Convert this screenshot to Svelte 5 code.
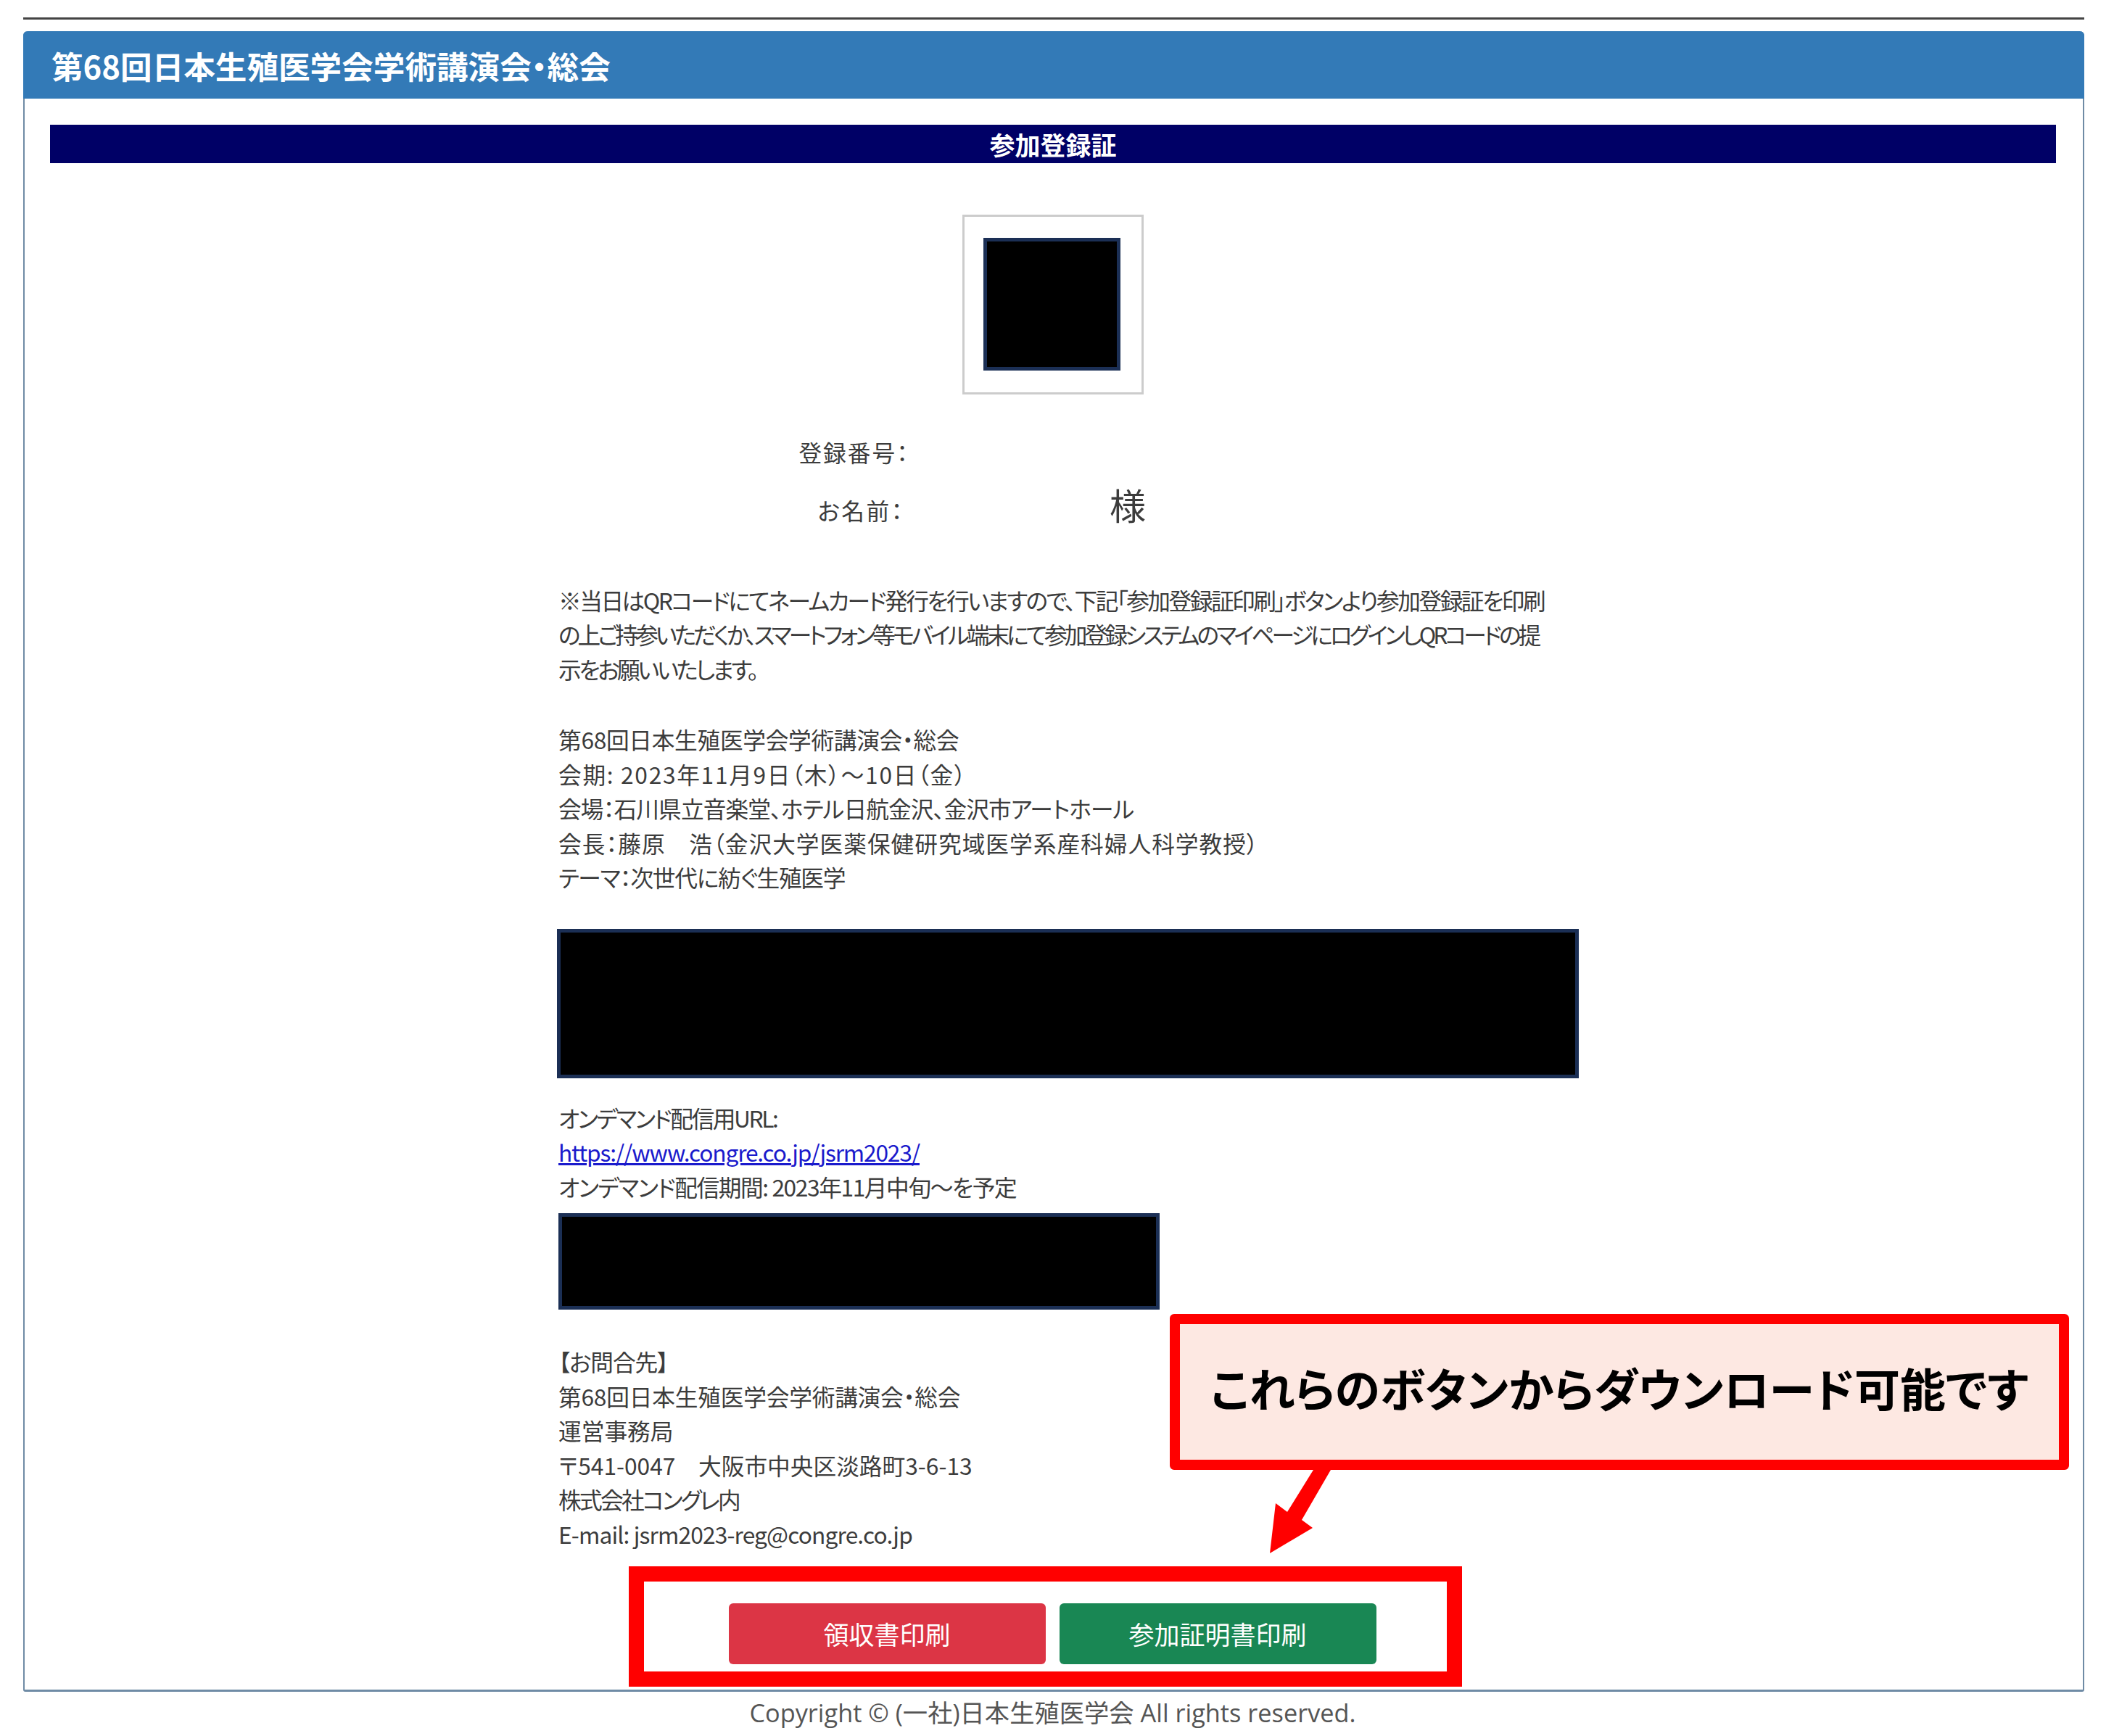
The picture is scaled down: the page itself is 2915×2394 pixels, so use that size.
<script>
  const notice = [
    { t: "※当日はQRコードにてネームカード発行を行いますので、下記「参加登録証印刷」ボタンより参加登録証を印刷", ls: -2.5 },
    { t: "の上ご持参いただくか、スマートフォン等モバイル端末にて参加登録システムのマイページにログインしQRコードの提", ls: -3.95 },
    { t: "示をお願いいたします。", ls: -3.4 },
  ];
  const meeting = [
    { t: "第68回日本生殖医学会学術講演会・総会", ls: -0.3 },
    { t: "会期: 2023年11月9日（木）～10日（金）", ls: 1.7 },
    { t: "会場：石川県立音楽堂、ホテル日航金沢、金沢市アートホール", ls: -0.9 },
    { t: "会長：藤原　浩（金沢大学医薬保健研究域医学系産科婦人科学教授）", ls: 1 },
    { t: "テーマ：次世代に紡ぐ生殖医学", ls: -1.2 },
  ];
  const contact = [
    { t: "【お問合先】", ls: -1 },
    { t: "第68回日本生殖医学会学術講演会・総会", ls: -0.2 },
    { t: "運営事務局", ls: 0 },
    { t: "〒541-0047　大阪市中央区淡路町3-6-13", ls: 0 },
    { t: "株式会社コングレ内", ls: -2.7 },
    { t: "E-mail: jsrm2023-reg@congre.co.jp", ls: -0.85 },
  ];
</script>

<div class="page">
  <div class="rule"></div>

  <section class="card">
    <header class="card-head">第68回日本生殖医学会学術講演会・総会</header>
    <div class="card-body">
      <h2 class="banner">参加登録証</h2>

      <div class="thumb"><div class="redact qr"></div></div>

      <dl class="who">
        <dt>登録番号：</dt>
        <dd></dd>
        <dt class="short">お名前：</dt>
        <dd class="name">様</dd>
      </dl>

      <div class="info">
        <p>{#each notice as line}<span style:letter-spacing="{line.ls}px">{line.t}</span>{/each}</p>
        <p class="gap">{#each meeting as line}<span style:letter-spacing="{line.ls}px">{line.t}</span>{/each}</p>

        <div class="redact wide"></div>

        <p class="ondemand">
          <span style:letter-spacing="-2.4px">オンデマンド配信用URL:</span>
          <span style:letter-spacing="-1.15px"><a href="https://www.congre.co.jp/jsrm2023/">https://www.congre.co.jp/jsrm2023/</a></span>
          <span style:letter-spacing="-1.4px">オンデマンド配信期間: 2023年11月中旬～を予定</span>
        </p>

        <div class="redact narrow"></div>

        <p class="contact">{#each contact as line}<span style:letter-spacing="{line.ls}px">{line.t}</span>{/each}</p>
      </div>

      <div class="actions">
        <button class="btn red">領収書印刷</button>
        <button class="btn green">参加証明書印刷</button>
      </div>
    </div>
  </section>

  <footer class="copy">Copyright © (一社)日本生殖医学会 All rights reserved.</footer>

  <!-- annotation layer -->
  <div class="callout">これらのボタンからダウンロード可能です</div>
  <svg class="arrow" width="120" height="130" viewBox="0 0 120 130">
    <polygon points="61,0 85,0 45,69 60,80 1,115 9,46 25,58" fill="#ff0000" />
  </svg>
  <div class="frame"></div>
</div>

<style>
  :global(body) {
    margin: 0;
    background: #fff;
  }

  .page {
    position: relative;
    width: 2915px;
    height: 2394px;
    padding-top: 24px;
    box-sizing: border-box;
    overflow: hidden;
    font-family: "Noto Sans CJK JP", sans-serif;
    font-feature-settings: "palt";
    font-size: 31.7px;
    line-height: 47.5px;
    color: #3c3c3c;
  }

  .rule {
    height: 3px;
    margin: 0 41px 0 32px;
    background: #444;
  }

  .card {
    margin: 16px 41px 0 32px;
    height: 2290px;
    box-sizing: border-box;
    border: solid #6f8ba5;
    border-width: 0 2px 3px 2px;
    border-radius: 6px 6px 3px 3px;
  }

  .card-head {
    height: 93px;
    margin: 0 -2px;
    padding-left: 39px;
    border-radius: 6px 6px 0 0;
    background: #337ab7;
    color: #fff;
    font-size: 43.6px;
    font-weight: 700;
    line-height: 95px;
  }

  .card-body {
    padding: 36px 37px 0 35px;
  }

  .banner {
    margin: 0;
    height: 53px;
    background: #000066;
    color: #fff;
    font-size: 35px;
    font-weight: 700;
    line-height: 53px;
    text-align: center;
  }

  .thumb {
    width: 250px;
    height: 248px;
    margin: 71px auto 0;
    padding: 29px 0 0 26px;
    box-sizing: border-box;
    border: 3px solid #ccc;
  }

  .redact {
    box-sizing: border-box;
    border: 5px solid #1b2f55;
    background: #000;
  }

  .qr {
    width: 189px;
    height: 183px;
  }

  .who {
    display: grid;
    grid-template-columns: 256px 400px;
    row-gap: 9px;
    align-items: baseline;
    justify-content: start;
    margin: 45px 0 0 929px;
  }

  .who dt {
    text-align: right;
    white-space: nowrap;
    letter-spacing: 2px;
  }

  .who .short {
    padding-right: 7px;
    letter-spacing: 2.5px;
  }

  .who dd {
    margin: 0;
    min-height: 47.5px;
  }

  .who .name {
    margin-top: 8px;
    padding-left: 276px;
    font-size: 50px;
    line-height: 62px;
  }

  .info {
    margin: 76px 0 0 701px;
    width: 1409px;
  }

  .info p {
    margin: 0;
  }

  .info span {
    display: block;
    white-space: nowrap;
  }

  .info .gap {
    margin-top: 50px;
  }

  .info a {
    color: #1a1acc;
  }

  .wide {
    width: 1409px;
    height: 206px;
    margin: 47px 0 0 -2px;
  }

  .info .ondemand {
    margin-top: 31px;
  }

  .narrow {
    width: 829px;
    height: 133px;
    margin-top: 13px;
  }

  .info .contact {
    margin-top: 48px;
  }

  .actions {
    display: flex;
    justify-content: center;
    gap: 19px;
    margin-top: 72px;
    padding-right: 2px;
  }

  .btn {
    width: 437px;
    height: 84px;
    padding: 0;
    border: 0;
    border-radius: 6px;
    color: #fff;
    font: inherit;
    font-size: 35px;
    font-feature-settings: normal;
  }

  .red {
    background: #dc3545;
  }

  .green {
    background: #198754;
  }

  .copy {
    margin-top: 5px;
    width: 2903px;
    text-align: center;
    font-family: "Open Sans", "Noto Sans CJK JP", sans-serif;
    font-size: 34.3px;
    color: #555;
  }

  .callout {
    position: absolute;
    left: 1613px;
    top: 1812px;
    width: 1240px;
    height: 215px;
    box-sizing: border-box;
    border: 14px solid #ff0000;
    border-radius: 6px;
    background: #fde8e2;
    color: #000;
    font-size: 63px;
    font-weight: 700;
    line-height: 173px;
    text-align: center;
    white-space: nowrap;
  }

  .arrow {
    position: absolute;
    left: 1750px;
    top: 2027px;
  }

  .frame {
    position: absolute;
    left: 867px;
    top: 2160px;
    width: 1149px;
    height: 166px;
    box-sizing: border-box;
    border: 21px solid #ff0000;
  }
</style>
